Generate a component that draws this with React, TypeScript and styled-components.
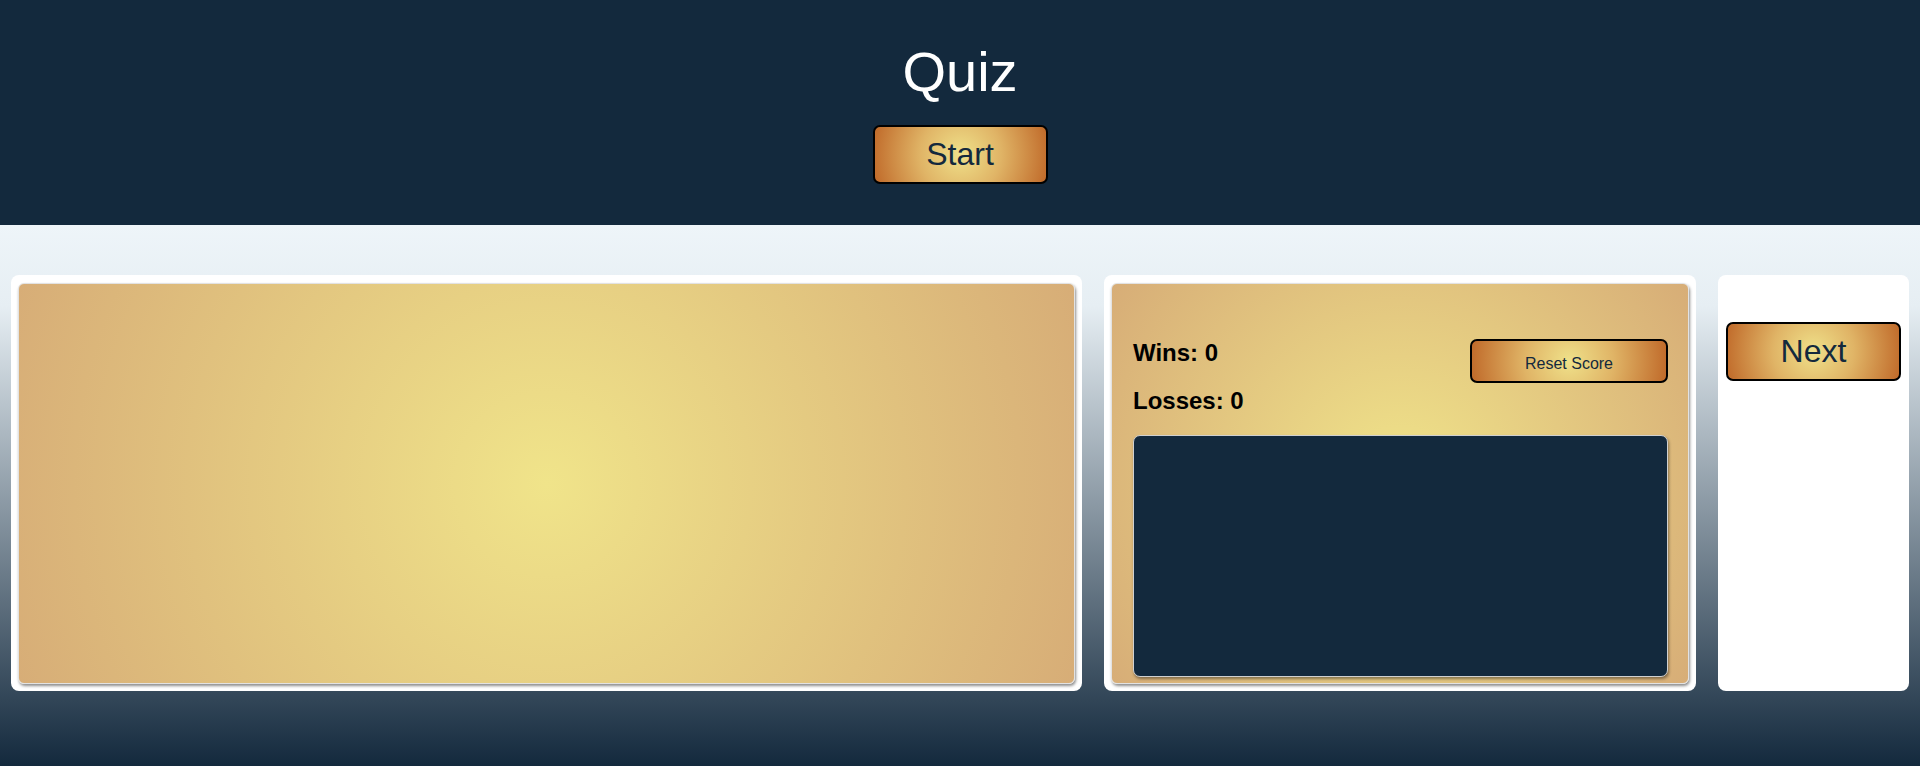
import styled, { createGlobalStyle } from "styled-components";

const GlobalStyle = createGlobalStyle`
  * {
    box-sizing: border-box;
  }
  html, body {
    margin: 0;
    padding: 0;
  }
  body {
    font-family: "Liberation Sans", Arial, sans-serif;
    background: #13293d;
  }
`;

const Page = styled.div`
  min-height: 100vh;
  display: flex;
  flex-direction: column;
`;

const Header = styled.header`
  background: #13293d;
  padding: 40px 0 41px;
  display: flex;
  flex-direction: column;
  align-items: center;
`;

const Title = styled.h1`
  margin: 0 0 21px;
  color: #ffffff;
  font-size: 56px;
  font-weight: 400;
  line-height: 64px;
`;

const GoldButton = styled.button<{ $size?: "big" | "small" }>`
  display: flex;
  align-items: center;
  justify-content: center;
  width: ${({ $size }) => ($size === "small" ? "198px" : "175px")};
  height: ${({ $size }) => ($size === "small" ? "44px" : "59px")};
  padding: ${({ $size }) => ($size === "small" ? "6px 0 0" : "0")};
  border: 2px solid #000;
  border-radius: 7px;
  background: radial-gradient(circle, #efe18a 0%, #e0b466 45%, #c06a2a 100%);
  color: #13293d;
  font-family: "Liberation Sans", Arial, sans-serif;
  font-size: ${({ $size }) => ($size === "small" ? "16px" : "32px")};
  cursor: pointer;
`;

const Main = styled.main`
  flex: 1;
  background: linear-gradient(
    to bottom,
    #eef5f9 0%,
    #e6eef3 15%,
    #13293d 100%
  );
  padding: 50px 11px 0;
`;

const Board = styled.div`
  display: grid;
  grid-template-columns: 1071px 592px 191px;
  column-gap: 22px;
  height: 416px;
`;

const Panel = styled.section`
  background: #ffffff;
  border-radius: 8px;
  padding: 8px 7px 7px;
  display: flex;
  flex-direction: column;
`;

const Card = styled.div`
  flex: 1;
  border: 1px solid #e2e2e2;
  border-radius: 6px;
  background: radial-gradient(circle, #f0e48a 0%, #d7ad77 100%);
  box-shadow: 1px 2px 3px rgba(0, 0, 0, 0.45);
`;

const ScoreCard = styled(Card)`
  display: flex;
  flex-direction: column;
  padding: 55px 20px 6px 21px;
`;

const ScoreRow = styled.div`
  display: flex;
  justify-content: space-between;
  align-items: flex-start;
`;

const Stats = styled.div`
  display: flex;
  flex-direction: column;
  gap: 20px;
`;

const Stat = styled.div`
  color: #000;
  font-size: 24px;
  font-weight: 700;
  line-height: 28px;
`;

const Log = styled.div`
  margin-top: 20px;
  flex: 1;
  background: #13293d;
  border: 1px solid #d0d0d0;
  border-radius: 7px;
  box-shadow: 1px 2px 3px rgba(0, 0, 0, 0.4);
`;

const SidePanel = styled(Panel)`
  padding: 47px 8px 8px;
`;

export default function App() {
  return (
    <Page>
      <GlobalStyle />
      <Header>
        <Title>Quiz</Title>
        <GoldButton>Start</GoldButton>
      </Header>
      <Main>
        <Board>
          <Panel>
            <Card />
          </Panel>
          <Panel>
            <ScoreCard>
              <ScoreRow>
                <Stats>
                  <Stat>Wins: 0</Stat>
                  <Stat>Losses: 0</Stat>
                </Stats>
                <GoldButton $size="small">Reset Score</GoldButton>
              </ScoreRow>
              <Log />
            </ScoreCard>
          </Panel>
          <SidePanel>
            <GoldButton>Next</GoldButton>
          </SidePanel>
        </Board>
      </Main>
    </Page>
  );
}
